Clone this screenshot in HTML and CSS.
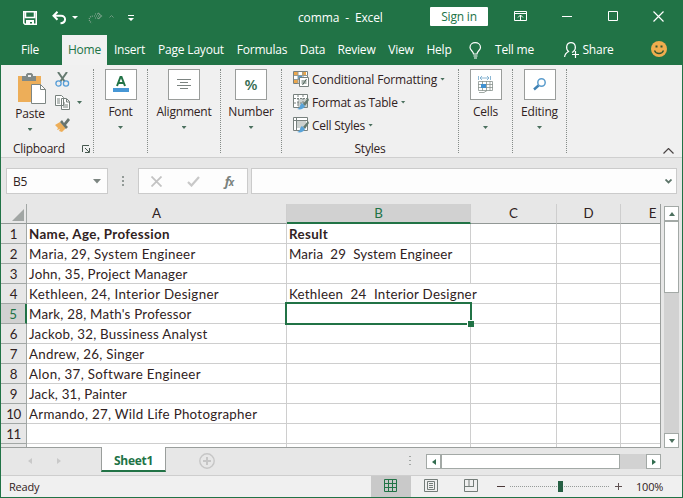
FILE: index.html
```
<!DOCTYPE html>
<html lang="en">
<head>
<meta charset="utf-8">
<title>comma - Excel</title>
<link rel="stylesheet" href="styles.css">
</head>
<body>
<div class="window">
  <header class="titlebar">
    <div class="quick">
      <svg width="14" height="14" viewBox="0 0 14 14"><path d="M.75.75h12.5v12.5H2L.75 12zM2.500 1v5.500h9V1" fill="none" stroke="#fff" stroke-width="1.500"/><path d="M3 9h8v4H9v-2H7v2H3z" fill="#fff"/></svg>
      <svg class="undo" width="15" height="14" viewBox="0 0 15 14"><path d="M5.500 .8 1.500 4.800l4 4M2 4.800h7c5.500 0 5.500 7-.5 7.500" fill="none" stroke="#fff" stroke-width="2"/></svg>
      <svg class="undo-arrow" width="6" height="3" viewBox="0 0 6 3"><path d="M0 0h6L3 3z" fill="#fff"/></svg>
      <svg class="redo" width="15" height="12" viewBox="0 0 15 12"><path d="m10 1 3.500 3L10 7M13 4H6C0 4 0 9 4 11M7 2h5M7 6h5" fill="none" stroke="#8cab98" stroke-width="1.200" stroke-dasharray="1 1"/></svg>
      <svg class="redo-arrow" width="5" height="3" viewBox="0 0 5 3"><path d="m.5 2.500 2-2 2 2" fill="none" stroke="#6f9b81"/></svg>
      <svg class="customize" width="6" height="7" viewBox="0 0 6 7"><path d="M0 0h6v1H0zM0 3h6L3 6z" fill="#fff"/></svg>
    </div>
    <div class="doc">comma&nbsp; -&nbsp; Excel</div>
    <div class="signin">Sign in</div>
    <div class="controls">
      <svg width="13" height="10" viewBox="0 0 13 10"><path d="M.5.5h12v9H.5zM1 2.500h11M6.500 9V4M4 6.500 6.500 4 9 6.500" fill="none" stroke="#fff"/></svg>
      <svg class="min" width="10" height="1"><path d="M0 0h10v1H0z" fill="#fff"/></svg>
      <svg class="max" width="10" height="10"><path d="M.5.5h9v9h-9z" fill="none" stroke="#fff"/></svg>
      <svg class="close" width="11" height="11"><path d="m.5.500 10 10m0-10-10 10" fill="none" stroke="#fff" stroke-width="1.200"/></svg>
    </div>
  </header>
  <nav class="tabs">
    <span class="file">File</span><span class="home">Home</span><span class="insert">Insert</span><span class="layout">Page Layout</span><span class="formulas">Formulas</span><span class="data">Data</span><span class="review">Review</span><span class="view">View</span><span class="help">Help</span>
    <svg class="bulb" width="13" height="17" viewBox="0 0 13 17"><path d="M4.500 12C4.500 9 1 8.500 1 5.500 1 2.500 3.500.700 6.200.700s5.300 1.800 5.300 4.800C11.500 8.500 8 9 8 12zM4.500 14h4M5 16h3" fill="none" stroke="#fff" stroke-width="1.200"/></svg>
    <span class="tellme">Tell me</span>
    <svg class="person" width="15" height="16" viewBox="0 0 15 16"><path d="M.6 15C.8 12 2.500 10.600 4.500 9.500 1.500 7 2 .700 7 .700S12.500 7 9.500 9.500L8 10.500M11.500 9v7M8 12.500h7" fill="none" stroke="#fff" stroke-width="1.200"/></svg>
    <span class="share">Share</span>
    <svg class="smiley" width="16" height="16" viewBox="0 0 16 16"><circle cx="8" cy="8" r="8" fill="#f0ad4e"/><path d="M4.500 4.500h2v2h-2zM9.500 4.500h2v2h-2z" fill="#31572f"/><path d="M3.500 9.500c1.500 4 7.500 4 9 0" fill="none" stroke="#31572f" stroke-width="1.300"/></svg>
  </nav>
  <section class="ribbon">
    <div class="group clipboard">
      <div class="cliprow">
        <div class="paste">
          <svg width="29" height="31" viewBox="0 0 29 31"><path d="M1 3h23v26H1z" fill="#edae59"/><path d="M5 3h4V1.500L10.500 0h4L16 1.500V3h3v5H5z" fill="#808987"/><path d="M11 2h3v2h-3z" fill="#eee"/><path d="M14.500 11.500h9l5 5v14h-14z" fill="#fff" stroke="#7d8683"/><path d="M23.500 11.500v5h5" fill="none" stroke="#7d8683"/></svg>
          <span>Paste</span><i class="arrow"></i>
        </div>
        <div class="cliptools">
          <svg width="15" height="15" viewBox="0 0 15 15"><path d="m3 0 7 10M12 0 5 10" stroke="#657a70" stroke-width="2"/><circle cx="3.500" cy="11.500" r="2.600" fill="#eee" stroke="#559dd7" stroke-width="1.300"/><circle cx="11" cy="11.500" r="2.600" fill="#eee" stroke="#559dd7" stroke-width="1.300"/></svg>
          <div class="copy"><svg width="15" height="15" viewBox="0 0 15 15"><path d="M.5.5h6l2 2v8h-8zM6.500 3.500h5l3 3v8h-8zM11.500 4v3h3M2 4h3M2 6h3M2 8h3M8 8h2M8 10h5M8 12h5" fill="#fff" stroke="#77817d"/></svg><i class="arrow"></i></div>
          <svg width="15" height="14" viewBox="0 0 15 14"><path d="m0 7 5-3 6 6-4 4-3-1 1-2-3 1 1-2z" fill="#edae59"/><path d="m5 4 2-2 2 3 4-5 2 2-4 5 2 2-2 2z" fill="#68746e"/></svg>
        </div>
      </div>
      <div class="cliplabel"><span>Clipboard</span><svg width="8" height="8" viewBox="0 0 8 8"><path d="M.5 7V.5H7M3 3l4 4M7.500 3v4.500H3" fill="none" stroke="#46584f"/></svg></div>
    </div>
    <div class="group font"><div class="tile"><svg width="16" height="17" viewBox="0 0 16 17"><path d="m4 10 3.500-9h1l3.500 9M5.500 7h5" fill="none" stroke="#217346" stroke-width="2"/><path d="M0 12h16v4H0z" fill="#4797d5"/></svg></div><span>Font</span><i class="arrow"></i></div>
    <div class="group alignment"><div class="tile"><svg width="14" height="11" viewBox="0 0 14 11"><path d="M0 .5h14M3 3.500h8M0 6.500h14M3 9.500h8" stroke="#7c8481"/></svg></div><span>Alignment</span><i class="arrow"></i></div>
    <div class="group number"><div class="tile percent">%</div><span>Number</span><i class="arrow"></i></div>
    <div class="group styles">
      <div class="style conditional"><svg width="16" height="16" viewBox="0 0 16 16"><path d="M.5.5h14v12H.5z" fill="#fff" stroke="#78817e"/><path d="M1 1h4v4H1zM9 1h4v3H9zM1 9h4v3H1z" fill="#eca64b"/><path d="M5 5h4v3H5z" fill="#4d9bd7"/><path d="M5 1v12M10 1v12M1 4.500h14M1 8.500h14" stroke="#939b97"/><path d="M6.500 6.500h9v9h-9z" fill="#fff" stroke="#78817e"/><path d="M8.500 10h5M8.500 12h5m0-4-4 6" stroke="#52665c"/></svg><span>Conditional Formatting</span><i class="arrow"></i></div>
      <div class="style table"><svg width="16" height="16" viewBox="0 0 16 16"><path d="M.5.5h14v13H.5z" fill="#fff" stroke="#78817e"/><path d="M5 5h9v8H5z" fill="#ccd1cf"/><path d="M5 1v13M10 1v13M1 4.500h14M1 9h14" stroke="#78817e" stroke-dasharray="2 1"/><path d="m15 4-5 6 2 2 4-6z" fill="#667b70"/><path d="m9 9 3 3c-1 3-5 4-8 3 4-1 2-4 5-6z" fill="#59a3d8"/></svg><span>Format as Table</span><i class="arrow"></i></div>
      <div class="style cellstyles"><svg width="16" height="16" viewBox="0 0 16 16"><path d="M.5.5h14v13H.5z" fill="#fff" stroke="#78817e"/><path d="M4 4h9v7H4z" fill="#ccd1cf"/><path d="M1 3.500h14M3.500 1v13" stroke="#78817e"/><path d="m15 4-5 6 2 2 4-6z" fill="#667b70"/><path d="m9 9 3 3c-1 3-5 4-8 3 4-1 2-4 5-6z" fill="#59a3d8"/></svg><span>Cell Styles</span><i class="arrow"></i></div>
      <div class="stylelabel">Styles</div>
    </div>
    <div class="group cells"><div class="tile"><svg width="15" height="17" viewBox="0 0 15 17"><path d="M.5 0v4M12.500 0v4M2 2h9M4 0 2 2l2 2M9 0l2 2-2 2" fill="none" stroke="#6fa5c9" stroke-width=".8"/><path d="M.5 5.500h14v9H.5zM4.500 5v10M8.500 5v10M12 5v10M0 8.500h15M0 11.500h15M1 16.500h5l3-2" fill="none" stroke="#89938e" stroke-width=".8"/><path d="M3 8h5v4H3z" fill="#4091d1"/></svg></div><span>Cells</span><i class="arrow"></i></div>
    <div class="group editing"><div class="tile"><svg width="14" height="13" viewBox="0 0 14 13"><circle cx="8.500" cy="4.500" r="3.700" fill="none" stroke="#5c9dcd" stroke-width="1.500"/><path d="M5.500 7.500 1 11.500" stroke="#3f82b4" stroke-width="2.400"/></svg></div><span>Editing</span><i class="arrow"></i></div>
    <svg class="collapse" width="11" height="6" viewBox="0 0 11 6"><path d="m.5 5.500 5-5 5 5" fill="none" stroke="#4b4545" stroke-width="1.200"/></svg>
  </section>
  <section class="formula">
    <div class="namebox"><span>B5</span><svg width="8" height="5" viewBox="0 0 8 5"><path d="M0 0h8L4 4.500z" fill="#7c8581"/></svg></div>
    <svg class="grip" width="2" height="11"><path d="M1 0v11" stroke="#929a97" stroke-width="2" stroke-dasharray="2 2"/></svg>
    <div class="fxbox"><svg width="11" height="11" viewBox="0 0 11 11"><path d="m.5.500 10 10m0-10-10 10" stroke="#c3c3c3" stroke-width="1.800"/></svg><svg width="13" height="11" viewBox="0 0 13 11"><path d="m1 6 3.500 3.500L12 1" fill="none" stroke="#c8c8c8" stroke-width="2.200"/></svg><em>f<small>x</small></em></div>
    <div class="input"><svg width="7" height="5" viewBox="0 0 7 5"><path d="m.5.500 3 3 3-3" fill="none" stroke="#5d756a" stroke-width="1.800"/></svg></div>
  </section>
  <main class="sheet">
    <div class="grid">
      <div class="row head"><div class="rownum"><svg width="12" height="12"><path d="M12 0v12H0z" fill="#a1a6a4"/></svg></div><div>A</div><div class="selcol">B</div><div>C</div><div>D</div><div class="ecol">E</div></div>
      <div class="row bold"><div class="rownum">1</div><div><span class="r1">Name, Age, Profession</span></div><div><span class="r1">Result</span></div><div></div><div></div><div></div></div>
      <div class="row"><div class="rownum">2</div><div><span class="r2">Maria, 29, System Engineer</span></div><div><span class="r2b">Maria&nbsp; 29&nbsp; System Engineer</span></div><div></div><div></div><div></div></div>
      <div class="row"><div class="rownum">3</div><div><span class="r3">John, 35, Project Manager</span></div><div></div><div></div><div></div><div></div></div>
      <div class="row"><div class="rownum">4</div><div><span class="r4">Kethleen, 24, Interior Designer</span></div><div class="overflow"><span class="r4b">Kethleen&nbsp; 24&nbsp; Interior Designer</span></div><div></div><div></div><div></div></div>
      <div class="row"><div class="rownum selrow">5</div><div><span class="r5">Mark, 28, Math's Professor</span></div><div class="active"><b class="selection"></b></div><div></div><div></div><div></div></div>
      <div class="row"><div class="rownum">6</div><div><span class="r6">Jackob, 32, Bussiness Analyst</span></div><div></div><div></div><div></div><div></div></div>
      <div class="row"><div class="rownum">7</div><div><span class="r7">Andrew, 26, Singer</span></div><div></div><div></div><div></div><div></div></div>
      <div class="row"><div class="rownum">8</div><div><span class="r8">Alon, 37, Software Engineer</span></div><div></div><div></div><div></div><div></div></div>
      <div class="row"><div class="rownum">9</div><div><span class="r9">Jack, 31, Painter</span></div><div></div><div></div><div></div><div></div></div>
      <div class="row"><div class="rownum">10</div><div><span class="r10">Armando, 27, Wild Life Photographer</span></div><div></div><div></div><div></div><div></div></div>
      <div class="row"><div class="rownum">11</div><div></div><div></div><div></div><div></div><div></div></div>
      <div class="row last"><div class="rownum"></div><div></div><div></div><div></div><div></div><div></div></div>
    </div>
    <div class="vscroll"><div class="btn"><svg width="6" height="4"><path d="M0 4h6L3 0z" fill="#4c705e"/></svg></div><div class="vthumb"></div><div class="btn down"><svg width="6" height="4"><path d="M0 0h6L3 4z" fill="#4c705e"/></svg></div></div>
  </main>
  <div class="sheetbar">
    <svg class="prev" width="5" height="6"><path d="M5 0v6L1 3z" fill="#c9c9c9"/></svg><svg class="next" width="5" height="6"><path d="M0 0v6l4-3z" fill="#c9c9c9"/></svg>
    <div class="sheettab">Sheet1</div>
    <svg class="add" width="16" height="16" viewBox="0 0 16 16"><circle cx="8" cy="8" r="7.200" fill="none" stroke="#c6c6c6" stroke-width="1.400"/><path d="M8 4v8M4 8h8" stroke="#c6c6c6" stroke-width="2"/></svg>
    <svg class="grip2" width="2" height="11"><path d="M1 0v11" stroke="#a2a6a4" stroke-width="2" stroke-dasharray="1 3"/></svg>
    <div class="hscroll"><div class="btn"><svg width="4" height="6"><path d="M4 0v6L0 3z" fill="#316c4e"/></svg></div><div class="hthumb"></div><div class="btn right"><svg width="4" height="6"><path d="M0 0v6l4-3z" fill="#316c4e"/></svg></div></div>
  </div>
  <footer class="status">
    <span class="ready">Ready</span>
    <div class="normal"><svg width="13" height="13" viewBox="0 0 13 13"><path d="M.5.5h12v12H.5zM4.500 0v13M8.500 0v13M0 4.500h13M0 8.500h13" fill="none" stroke="#217346"/></svg></div>
    <svg class="pageview" width="14" height="13" viewBox="0 0 14 13"><path d="M.5.5h13v12H.5zM3.500 2.500h7v8h-7zM5 4.500h4M5 6.500h4M5 8.500h4" fill="none" stroke="#747d79"/></svg>
    <svg class="breakview" width="14" height="13" viewBox="0 0 14 13"><path d="M.5.5h13v12H.5zM5 0v7.500M9.500 0v7.500M1 7.500h9" fill="none" stroke="#747d79"/></svg>
    <svg class="minus" width="8" height="1"><path d="M0 0h8v1H0z" fill="#4b3939"/></svg>
    <svg class="slider" width="100" height="12"><path d="M0 6.500h100" stroke="#969b99" stroke-dasharray="1 1"/><path d="M48 1h5v11h-5z" fill="#276044"/></svg>
    <svg class="plus" width="7" height="7"><path d="M0 3.500h7M3.500 0v7" stroke="#5d5050"/></svg>
    <span class="zoom">100%</span>
  </footer>
</div>
</body>
</html>
```
FILE: styles.css
```
* { box-sizing: border-box; }
body { margin: 0; font-family: "Open Sans", "Noto Sans", sans-serif; font-size: 12px; letter-spacing: -.2px; color: #302222; }
svg { display: block; flex: none; }
.window { width: 683px; height: 498px; overflow: hidden; background: #e7e7e7; border: solid #217346; border-width: 0 1px 1px; display: flex; flex-direction: column; white-space: nowrap; }
.titlebar { height: 35px; flex: none; background: #217346; color: #fff; display: flex; }
.quick { width: 295px; padding: 11px 0 0 22px; display: flex; align-items: flex-start; }
.undo { margin-left: 15px; }
.undo-arrow { margin: 5px 0 0 5px; }
.redo { margin: 1px 0 0 10px; }
.redo-arrow { margin: 4px 0 0 6px; }
.customize { margin: 4px 0 0 14px; }
.doc { width: 134px; padding-left: 2px; line-height: 35px; letter-spacing: -.13px; }
.signin { width: 58px; height: 19px; margin-top: 7px; border-radius: 1px; line-height: 20px; text-align: center; background: #fff; color: #217346; }
.controls { display: flex; padding: 11px 0 0 26px; }
.min { margin: 5px 0 0 35px; }
.max { margin-left: 36px; }
.close { margin-left: 35px; }
.tabs { height: 30px; flex: none; background: #217346; color: #fff; display: flex; line-height: 30px; }
.tabs span { display: flex; justify-content: center; }
.file { width: 61px; padding-right: 3px; }
.tabs .home { width: 45px; background: #f1f1f1; color: #217346; }
.insert { width: 45px; }
.layout { width: 78px; }
.formulas { width: 64px; }
.data { width: 37px; }
.review { width: 51px; }
.view { width: 38px; }
.help { width: 38px; }
.bulb { margin: 7px 0 0 11px; }
.tellme { width: 39px; margin-left: 13px; }
.person { margin: 7px 0 0 30px; }
.share { width: 30px; margin-left: 4px; }
.smiley { margin: 6px 0 0 38px; }
.ribbon { height: 93px; flex: none; background: #f0f0f0; border-bottom: 1px solid #cfcfcf; display: flex; padding-top: 4px; }
.group { height: 84px; border-right: 1px dotted #858b88; display: flex; flex-direction: column; align-items: center; flex: none; }
.arrow { display: block; flex: none; width: 5px; height: 3px; background: #4b705e; clip-path: polygon(0 0, 100% 0, 50% 100%); }
.tile { width: 32px; height: 31px; border: 1px solid #9a9d9b; background: #fff; display: flex; align-items: center; justify-content: center; }
.group > span { line-height: 16px; margin-top: 4px; }
.group > .arrow { margin-top: 6px; }
.font { width: 54px; }
.alignment { width: 73px; }
.number { width: 61px; }
.cells { width: 54px; }
.editing { width: 54px; }
.percent { font-size: 15px; font-weight: 600; color: #356b50; padding-bottom: 2px; }
.clipboard { width: 93px; align-items: stretch; }
.cliprow { display: flex; flex: none; height: 72px; padding-left: 13px; }
.paste { width: 32px; display: flex; flex-direction: column; align-items: center; padding-top: 4px; }
.paste > svg { align-self: flex-end; }
.paste span { line-height: 16px; margin-top: 2px; }
.paste .arrow { margin-top: 6px; }
.cliptools { padding: 3px 0 0 9px; display: flex; flex-direction: column; gap: 8px; }
.copy { display: flex; align-items: center; gap: 7px; }
.cliplabel { flex: none; padding-left: 12px; display: flex; align-items: center; gap: 17px; height: 16px; line-height: 16px; letter-spacing: -.3px; }
.styles { width: 177px; align-items: flex-start; padding: 2px 0 0 11px; }
.style { display: flex; flex: none; align-items: center; gap: 3px; height: 16px; margin-bottom: 7px; line-height: 16px; letter-spacing: -.17px; }
.style span { padding-top: 1px; }
.table span, .cellstyles span { padding-top: 2px; letter-spacing: -.25px; }
.stylelabel { width: 154px; text-align: center; line-height: 16px; margin-top: 1px; }
.collapse { margin: 79px 0 0 96px; }
.formula { display: flex; height: 46px; flex: none; padding: 10px 5px 0; }
.namebox, .fxbox, .input { height: 26px; border: 1px solid #cbcbcb; background: #fdfdfd; display: flex; align-items: center; }
.namebox { width: 102px; padding: 0 6px; justify-content: space-between; }
.grip { margin: 8px 14px 0 14px; }
.fxbox { width: 110px; padding: 0 12px; justify-content: space-between; }
.fxbox em { font: italic bold 13px/20px "Noto Sans", sans-serif; color: #7a827e; letter-spacing: -1px; padding-right: 2px; }
.fxbox small { font-size: 10px; }
.input { flex: 1; margin-left: 3px; justify-content: flex-end; padding-right: 4px; }
.sheet { display: flex; height: 244px; flex: none; }
.grid { width: 660px; overflow: hidden; border-bottom: 1px solid #9a9e9c; border-right: 1px solid #9a9e9c; }
.row { display: grid; grid-template-columns: 26px 260px 184px 86px 64px 40px; height: 20px; font: 13.333px/20px Lato, "Open Sans", sans-serif; letter-spacing: 0; }
.row > div { border-right: 1px solid #cecece; border-bottom: 1px solid #cecece; background: #fff; padding-left: 2px; min-width: 0; line-height: 20px; height: 20px; }
.row .rownum { text-align: center; background: #e7e7e7; border-color: #a2a7a5; padding-left: 0; letter-spacing: -.4px; }
.row.head > div { background: #e7e7e7; text-align: center; border-bottom-color: #929896; padding-left: 0; line-height: 19px; }
.row.head svg { margin: 5px 0 0 11px; }
.row.head .selcol { background: #d1d1d1; color: #217346; border-bottom: 2px solid #217346; }
.row.head .ecol { padding-left: 23px; border-right: 0; }
.bold > div:not(.rownum) { font-weight: bold; }
.r1 { letter-spacing: .37px; }
.r2 { letter-spacing: .3px; }
.r2b { letter-spacing: .15px; }
.r3 { letter-spacing: .24px; }
.r4 { letter-spacing: .35px; }
.r4b { letter-spacing: .26px; }
.r5 { letter-spacing: .23px; }
.r6 { letter-spacing: .25px; }
.r7 { letter-spacing: .28px; }
.r8 { letter-spacing: .33px; }
.r9 { letter-spacing: .18px; }
.r10 { letter-spacing: .29px; }
.row .selrow { background: #d1d1d1; color: #217346; border-right: 2px solid #217346; }
.row .overflow { position: relative; z-index: 1; border-right-color: #fff; }
.active { position: relative; }
.selection { position: absolute; left: -2px; top: -2px; width: 187px; height: 23px; border: 2px solid #217346; z-index: 2; }
.selection::after { content: ""; position: absolute; right: -4px; bottom: -4px; width: 6px; height: 6px; background: #217346; border: 1px solid #fff; border-width: 1px 0 0 1px; }
.vscroll { width: 15px; height: 242px; margin: 2px 0 0 3px; background: #d2d2d2; display: flex; flex-direction: column; }
.btn { width: 15px; height: 15px; border: 1px solid #a3a9a6; background: #fff; display: flex; align-items: center; justify-content: center; flex: none; }
.vthumb { height: 72px; border: 1px solid #a3a9a6; background: #fff; }
.down { margin-top: auto; }
.sheetbar { display: flex; height: 28px; flex: none; border-bottom: 1px solid #cecece; }
.prev { margin: 10px 0 0 26px; }
.next { margin: 10px 0 0 25px; }
.sheettab { width: 65px; height: 25px; margin: -1px 0 0 39px; border: solid #9a9e9c; border-width: 0 1px; border-bottom: 2px solid #217346; background: #fff; color: #217346; font-weight: bold; text-align: center; line-height: 27px; letter-spacing: -.3px; }
.add { margin: 5px 0 0 33px; }
.grip2 { margin: 8px 0 0 194px; }
.hscroll { display: flex; width: 235px; height: 15px; margin: 6px 0 0 15px; background: #d2d2d2; }
.hthumb { width: 179px; background: #fff; border: 1px solid #a3a9a6; }
.right { margin-left: auto; }
.status { height: 21px; flex: none; background: #f0f0f0; display: flex; font-size: 11px; line-height: 21px; }
.ready { width: 370px; padding-left: 8px; }
.normal { width: 40px; background: #c9c9c9; padding: 3px 0 0 13px; }
.pageview { margin: 3px 0 0 13px; }
.breakview { margin: 3px 0 0 26px; }
.minus { margin: 10px 0 0 19px; }
.slider { margin: 4px 0 0 5px; }
.plus { margin: 7px 0 0 5px; }
.zoom { margin-left: 14px; }
```
